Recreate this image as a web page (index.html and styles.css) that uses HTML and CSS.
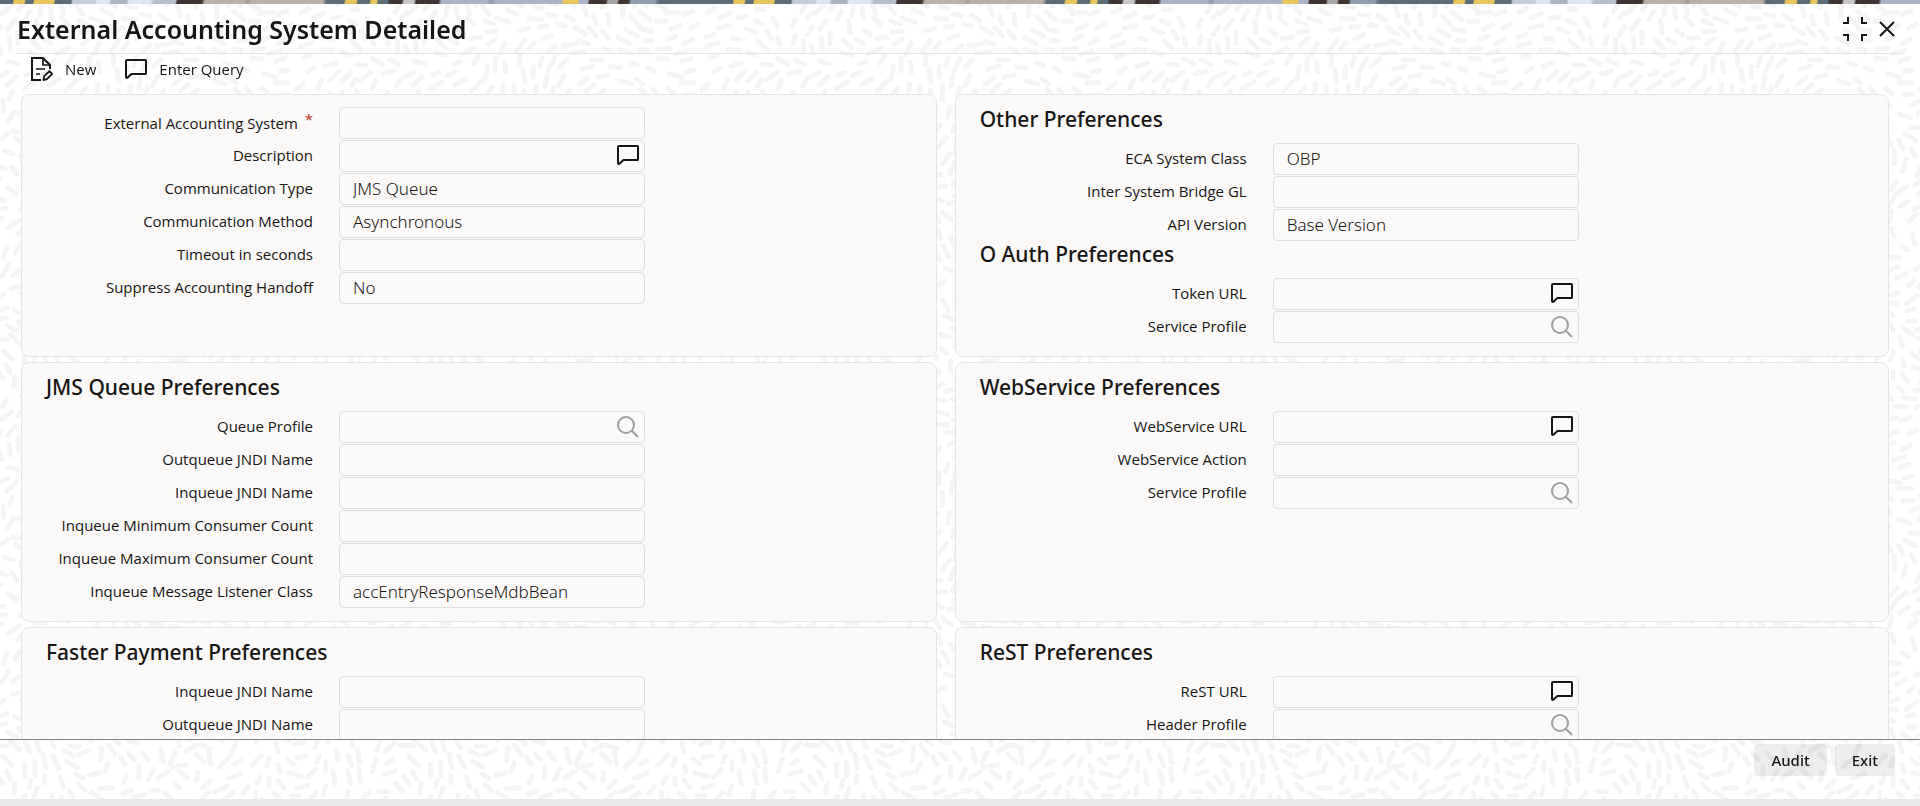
FILE: index.html
```html
<!DOCTYPE html>
<html lang="en">
<head>
    <meta charset="UTF-8">
    <meta name="viewport" content="width=device-width, initial-scale=1.0">
    <title>External Accounting System Detailed</title>
    <link rel="stylesheet" href="styles.css">
</head>
<body>
    <svg class="texture" aria-hidden="true">
        <defs>
            <pattern id="dashes" width="406" height="406" patternUnits="userSpaceOnUse"></pattern>
        </defs>
        <rect width="100%" height="100%" fill="url(#dashes)"/>
    </svg>

    <!-- Shared icons -->
    <svg class="sprite" aria-hidden="true">
        <symbol id="icon-comment" viewBox="0 0 22 20">
            <path d="M2 1h18.500a.5.5 0 0 1 .5.500v13a.5.5 0 0 1-.5.500H6.500L2.600 18.600Q1 19.500 1 18V2a1 1 0 0 1 1-1z" fill="none" stroke="currentColor" stroke-width="2" stroke-linejoin="round"/>
        </symbol>
        <symbol id="icon-search" viewBox="0 0 22 22">
            <circle cx="9" cy="9" r="8" fill="none" stroke="currentColor" stroke-width="2"/>
            <path d="M14.800 14.800L21 21" fill="none" stroke="currentColor" stroke-width="2"/>
        </symbol>
    </svg>

    <div class="strip"></div>

    <header class="header">
        <h1>External Accounting System Detailed</h1>
        <div class="window-actions">
            <button class="icon-btn" aria-label="Restore">
                <svg width="24" height="24" viewBox="0 0 24 24"><path d="M0 6h5V0M24 6h-5V0M0 18h5v6M24 18h-5v6" fill="none" stroke="currentColor" stroke-width="2"/></svg>
            </button>
            <button class="icon-btn" aria-label="Close">
                <svg width="16" height="16" viewBox="0 0 16 16"><path d="M1 1l14 14M15 1L1 15" fill="none" stroke="currentColor" stroke-width="2"/></svg>
            </button>
        </div>
    </header>

    <nav class="toolbar">
        <button class="tool">
            <svg width="22" height="24" viewBox="0 0 22 24" fill="none" stroke="currentColor" stroke-width="2">
                <path d="M10 23H1V1h11l7 7v4"/>
                <path d="M12 1v7h7M5 12h9M5 17h4" stroke-width="1.700"/>
                <path d="M12.500 23l.7-3.800 5.300-5 2.600 2.700-5.200 5.300z" stroke-linejoin="round" stroke-width="1.800"/>
            </svg>
            New
        </button>
        <button class="tool">
            <svg width="22" height="20"><use href="#icon-comment"/></svg>
            Enter Query
        </button>
    </nav>

    <main class="content">
        <section class="panel">
            <div class="row">
                <label for="extSystem">External Accounting System <span class="required">*</span></label>
                <div class="field"><input type="text" id="extSystem"></div>
            </div>
            <div class="row">
                <label for="description">Description</label>
                <div class="field">
                    <input type="text" id="description">
                    <button class="icon-btn" aria-label="Edit description"><svg width="22" height="20"><use href="#icon-comment"/></svg></button>
                </div>
            </div>
            <div class="row">
                <label for="commType">Communication Type</label>
                <div class="field"><input type="text" id="commType" value="JMS Queue" readonly></div>
            </div>
            <div class="row">
                <label for="commMethod">Communication Method</label>
                <div class="field"><input type="text" id="commMethod" value="Asynchronous" readonly></div>
            </div>
            <div class="row">
                <label for="timeout">Timeout in seconds</label>
                <div class="field"><input type="text" id="timeout"></div>
            </div>
            <div class="row">
                <label for="suppress">Suppress Accounting Handoff</label>
                <div class="field"><input type="text" id="suppress" value="No" readonly></div>
            </div>
        </section>

        <section class="panel">
            <h2>Other Preferences</h2>
            <div class="row">
                <label for="ecaClass">ECA System Class</label>
                <div class="field"><input type="text" id="ecaClass" value="OBP" readonly></div>
            </div>
            <div class="row">
                <label for="bridgeGl">Inter System Bridge GL</label>
                <div class="field"><input type="text" id="bridgeGl"></div>
            </div>
            <div class="row">
                <label for="apiVersion">API Version</label>
                <div class="field"><input type="text" id="apiVersion" value="Base Version" readonly></div>
            </div>
            <h2>O Auth Preferences</h2>
            <div class="row">
                <label for="tokenUrl">Token URL</label>
                <div class="field">
                    <input type="text" id="tokenUrl">
                    <button class="icon-btn" aria-label="Edit token URL"><svg width="22" height="20"><use href="#icon-comment"/></svg></button>
                </div>
            </div>
            <div class="row">
                <label for="oauthProfile">Service Profile</label>
                <div class="field">
                    <input type="text" id="oauthProfile">
                    <button class="icon-btn search" aria-label="Find service profile"><svg width="22" height="22"><use href="#icon-search"/></svg></button>
                </div>
            </div>
        </section>

        <section class="panel">
            <h2>JMS Queue Preferences</h2>
            <div class="row">
                <label for="queueProfile">Queue Profile</label>
                <div class="field">
                    <input type="text" id="queueProfile">
                    <button class="icon-btn search" aria-label="Find queue profile"><svg width="22" height="22"><use href="#icon-search"/></svg></button>
                </div>
            </div>
            <div class="row">
                <label for="outqueue">Outqueue JNDI Name</label>
                <div class="field"><input type="text" id="outqueue"></div>
            </div>
            <div class="row">
                <label for="inqueue">Inqueue JNDI Name</label>
                <div class="field"><input type="text" id="inqueue"></div>
            </div>
            <div class="row">
                <label for="minConsumers">Inqueue Minimum Consumer Count</label>
                <div class="field"><input type="text" id="minConsumers"></div>
            </div>
            <div class="row">
                <label for="maxConsumers">Inqueue Maximum Consumer Count</label>
                <div class="field"><input type="text" id="maxConsumers"></div>
            </div>
            <div class="row">
                <label for="listener">Inqueue Message Listener Class</label>
                <div class="field"><input type="text" id="listener" value="accEntryResponseMdbBean"></div>
            </div>
        </section>

        <section class="panel">
            <h2>WebService Preferences</h2>
            <div class="row">
                <label for="wsUrl">WebService URL</label>
                <div class="field">
                    <input type="text" id="wsUrl">
                    <button class="icon-btn" aria-label="Edit WebService URL"><svg width="22" height="20"><use href="#icon-comment"/></svg></button>
                </div>
            </div>
            <div class="row">
                <label for="wsAction">WebService Action</label>
                <div class="field"><input type="text" id="wsAction"></div>
            </div>
            <div class="row">
                <label for="wsProfile">Service Profile</label>
                <div class="field">
                    <input type="text" id="wsProfile">
                    <button class="icon-btn search" aria-label="Find service profile"><svg width="22" height="22"><use href="#icon-search"/></svg></button>
                </div>
            </div>
        </section>

        <section class="panel">
            <h2>Faster Payment Preferences</h2>
            <div class="row">
                <label for="fpInqueue">Inqueue JNDI Name</label>
                <div class="field"><input type="text" id="fpInqueue"></div>
            </div>
            <div class="row">
                <label for="fpOutqueue">Outqueue JNDI Name</label>
                <div class="field"><input type="text" id="fpOutqueue"></div>
            </div>
        </section>

        <section class="panel">
            <h2>ReST Preferences</h2>
            <div class="row">
                <label for="restUrl">ReST URL</label>
                <div class="field">
                    <input type="text" id="restUrl">
                    <button class="icon-btn" aria-label="Edit ReST URL"><svg width="22" height="20"><use href="#icon-comment"/></svg></button>
                </div>
            </div>
            <div class="row">
                <label for="headerProfile">Header Profile</label>
                <div class="field">
                    <input type="text" id="headerProfile">
                    <button class="icon-btn search" aria-label="Find header profile"><svg width="22" height="22"><use href="#icon-search"/></svg></button>
                </div>
            </div>
        </section>
    </main>

    <footer class="footer">
        <button class="btn">Audit</button>
        <button class="btn">Exit</button>
    </footer>

    <script src="texture.js"></script>
</body>
</html>
```

FILE: styles.css
```css
* {
    box-sizing: border-box;
}
body {
    font-family: "Open Sans", "Noto Sans", sans-serif;
    font-size: 15px;
    line-height: 20px;
    color: #161513;
    background-color: #fff;
    margin: 0;
    height: 100vh;
    display: flex;
    flex-direction: column;
    overflow: hidden;
    border-bottom: 7px solid #e8e8e8;
}
.texture {
    position: fixed;
    inset: 0;
    width: 100%;
    height: calc(100% - 7px);
    z-index: -1;
}
.texture line {
    stroke: #f4f4f4;
    stroke-width: 5;
    stroke-linecap: round;
}
.sprite {
    display: none;
}
button {
    font: inherit;
    color: inherit;
    background: none;
    border: none;
    padding: 0;
    cursor: pointer;
}
.icon-btn {
    display: flex;
}
.strip {
    height: 4px;
    flex-shrink: 0;
    background: linear-gradient(100deg,
        #5b6b78 13px, #eac55b 14px 24px, #5b6b78 26px 33px, #eac55b 34px 53px, #5b6b78 55px 70px,
        #c3cddb 72px 94px, #dde6f4 96px 108px, #a9b5c3 110px 125px, #dde6f4 127px 148px, #b3bfcc 152px 173px,
        #3c3532 175px 199px, #b8b0aa 202px 240px, #a39b95 244px, #b8b0aa 248px 318px, #5b6b78 322px 339px,
        #eac55b 341px 351px, #5b6b78 353px 364px, #eac55b 366px 371px, #5b6b78 373px 382px,
        #3c3532 384px 396px, #c9c6c3 398px 408px, #3c3532 410px 432px, #a8b3c8 435px 480px, #8e9aae 484px,
        #a8b3c8 488px 553px, #eac55b 556px 569px, #a8b3c8 571px 579px, #3c3532 581px 597px,
        #a8a5a3 599px 608px, #3c3532 610px 619px, #8d9cae 622px 645px, #5b6b78 650px) 0 0 / 720px 4px repeat-x;
}
.header {
    display: flex;
    align-items: center;
    justify-content: space-between;
    height: 50px;
    flex-shrink: 0;
    margin: 0 17px;
    padding-right: 8px;
    border-bottom: 1px solid #e3e3e3;
}
h1, h2 {
    font-family: "Noto Sans", "Open Sans", sans-serif;
}
h1 {
    margin: 0;
    font-size: 25px;
    line-height: 32px;
    font-weight: 600;
}
.window-actions {
    display: flex;
    align-items: center;
    gap: 12px;
}
.toolbar {
    display: flex;
    align-items: center;
    gap: 29px;
    height: 30px;
    flex-shrink: 0;
    margin: 0 31px;
}
.tool {
    display: flex;
    align-items: center;
    gap: 12px;
}
.content {
    flex: 1;
    min-height: 0;
    overflow: hidden;
    display: grid;
    grid-template-columns: 49fr 50fr;
    align-content: start;
    gap: 5px 18px;
    padding: 10px 31px 0 21px;
}
.panel {
    background-color: #fbf9f8;
    border: 1px solid #e6e4e3;
    border-radius: 8px;
    padding: 12px 24px;
}
h2 {
    margin: 0 0 12px;
    font-size: 21px;
    line-height: 24px;
    font-weight: 500;
}
.row {
    display: flex;
    align-items: center;
    gap: 26px;
    margin-bottom: 1px;
}
label {
    width: 267px;
    padding-bottom: 2px;
    text-align: right;
}
.required {
    color: #b3311f;
    vertical-align: 4px;
    line-height: 1;
    margin-left: 3px;
}
.field {
    display: flex;
    width: 306px;
    height: 32px;
    padding: 4px 5px 0 13px;
    border: 1px solid #dfdddc;
    border-radius: 4px;
}
.field input {
    flex: 1;
    min-width: 0;
    height: 22px;
    padding: 0;
    border: none;
    outline: none;
    background: none;
    font: 300 17px/22px "Noto Sans", "Open Sans", sans-serif;
    color: #161513;
}
.field .icon-btn {
    align-self: flex-start;
}
.search {
    color: #a09e9c;
}
.footer {
    display: flex;
    justify-content: flex-end;
    align-items: flex-start;
    gap: 8px;
    height: 60px;
    flex-shrink: 0;
    padding: 4px 25px 0;
    border-top: 1px solid #858585;
}
.btn {
    height: 32px;
    padding: 0 17px;
    border-radius: 4px;
    background-color: rgba(22, 21, 19, 0.08);
    font-family: "Noto Sans", "Open Sans", sans-serif;
    font-weight: 500;
}
.btn:hover {
    background-color: rgba(22, 21, 19, 0.14);
}
```

FILE: texture.js
```js
// Fills the background tile with short dashes that follow a wavy field
const SIZE = 406;
const tile = document.getElementById('dashes');
const points = [];
let seed = 7;

function random() {
    seed = (seed * 16807) % 2147483647;
    return seed / 2147483647;
}

function angleAt(x, y) {
    const u = x / SIZE * Math.PI * 2;
    const v = y / SIZE * Math.PI * 2;
    return Math.sin(u * 2 + Math.cos(v)) * 1.2 + Math.cos(v * 2 + Math.sin(u * 2)) * 1.1 + Math.sin(u + v * 3) * 0.6;
}

function addDash(x, y, angle, length) {
    const line = document.createElementNS('http://www.w3.org/2000/svg', 'line');
    const dx = Math.cos(angle) * length / 2;
    const dy = Math.sin(angle) * length / 2;
    line.setAttribute('x1', x - dx);
    line.setAttribute('y1', y - dy);
    line.setAttribute('x2', x + dx);
    line.setAttribute('y2', y + dy);
    tile.appendChild(line);
}

for (let i = 0; i < 16000; i++) {
    const x = random() * SIZE;
    const y = random() * SIZE;
    const angle = angleAt(x, y);
    // Distance is longer along the dash than across it
    const free = points.every(p => {
        let dx = Math.abs(p.x - x) > SIZE / 2 ? SIZE - Math.abs(p.x - x) : p.x - x;
        let dy = Math.abs(p.y - y) > SIZE / 2 ? SIZE - Math.abs(p.y - y) : p.y - y;
        const along = (dx * Math.cos(angle) + dy * Math.sin(angle)) / 17;
        const across = (-dx * Math.sin(angle) + dy * Math.cos(angle)) / 9;
        return along * along + across * across > 1;
    });
    if (!free) continue;
    points.push({ x, y });
    const length = 7 + random() * 7;
    // Repeat on the opposite side so the tile joins up
    for (const ox of [-SIZE, 0, SIZE]) {
        for (const oy of [-SIZE, 0, SIZE]) {
            const px = x + ox;
            const py = y + oy;
            if (px > -12 && px < SIZE + 12 && py > -12 && py < SIZE + 12) {
                addDash(px, py, angle, length);
            }
        }
    }
}
```
